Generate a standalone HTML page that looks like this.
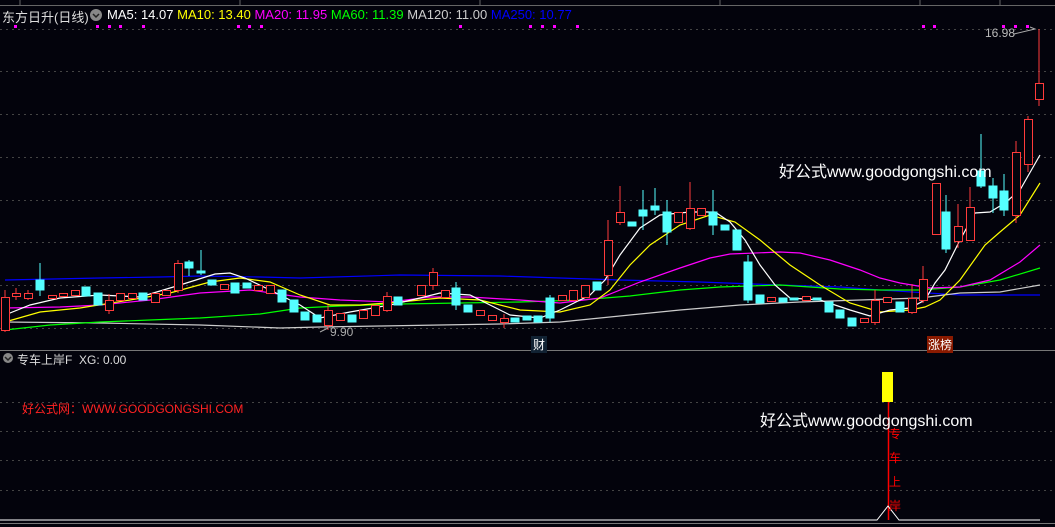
<!DOCTYPE html>
<html><head><meta charset="utf-8"><style>
body{margin:0;width:1055px;height:527px;background:#03030c;overflow:hidden;font-family:"Liberation Sans","Noto Sans CJK SC",sans-serif}
.t{position:absolute;white-space:nowrap;font-size:12px}
</style></head><body>
<svg width="1055" height="527" style="position:absolute;left:0;top:0">
<g stroke="#444" stroke-dasharray="2,4" stroke-width="1">
<line x1="0" y1="29.5" x2="1055" y2="29.5"/><line x1="0" y1="71.5" x2="1055" y2="71.5"/><line x1="0" y1="114.5" x2="1055" y2="114.5"/><line x1="0" y1="157.5" x2="1055" y2="157.5"/><line x1="0" y1="200.5" x2="1055" y2="200.5"/><line x1="0" y1="242.5" x2="1055" y2="242.5"/><line x1="0" y1="285.5" x2="1055" y2="285.5"/><line x1="0" y1="328.5" x2="1055" y2="328.5"/>
<line x1="0" y1="402.5" x2="1055" y2="402.5"/><line x1="0" y1="431.5" x2="1055" y2="431.5"/><line x1="0" y1="460.5" x2="1055" y2="460.5"/><line x1="0" y1="490.5" x2="1055" y2="490.5"/>
</g>
<g stroke="#666"><line x1="0" y1="5.5" x2="1055" y2="5.5"/><line x1="20" y1="0" x2="20" y2="5"/><line x1="240" y1="0" x2="240" y2="5"/><line x1="480" y1="0" x2="480" y2="5"/><line x1="720" y1="0" x2="720" y2="5"/><line x1="920" y1="0" x2="920" y2="5"/><line x1="1000" y1="0" x2="1000" y2="5"/></g>
<line x1="0" y1="350.5" x2="1055" y2="350.5" stroke="#777"/>
<line x1="0" y1="523.5" x2="1055" y2="523.5" stroke="#777"/>
<g fill="#f0f">
<rect x="14" y="25" width="3" height="3"/><rect x="96" y="25" width="3" height="3"/><rect x="108" y="25" width="3" height="3"/><rect x="119" y="25" width="3" height="3"/><rect x="142" y="25" width="3" height="3"/><rect x="237" y="25" width="3" height="3"/><rect x="248" y="25" width="3" height="3"/><rect x="260" y="25" width="3" height="3"/><rect x="459" y="25" width="3" height="3"/><rect x="529" y="25" width="3" height="3"/><rect x="541" y="25" width="3" height="3"/><rect x="553" y="25" width="3" height="3"/><rect x="576" y="25" width="3" height="3"/><rect x="922" y="25" width="3" height="3"/><rect x="933" y="25" width="3" height="3"/><rect x="1002" y="25" width="3" height="3"/><rect x="1014" y="25" width="3" height="3"/><rect x="1026" y="25" width="3" height="3"/>
</g>
<g fill="none" stroke-width="1.2">
<polyline stroke="#00f" points="5,280 100,278 160,277 200,276 260,277 300,278 400,275 500,276 560,278 620,280 700,282 780,285 840,287 880,290 960,295 1040,295"/>
<polyline stroke="#ccc" points="5,322 100,323 200,325 280,328 320,327 380,326 440,325 500,324 560,322 600,318 680,310 740,305 800,302 860,300 920,298 960,293 1000,292 1040,285"/>
<polyline stroke="#0f0" points="5,330 50,325 100,322 150,320 200,318 260,314 300,308 340,306 400,304 460,303 520,302 580,300 630,296 680,290 720,287 780,285 840,289 880,290 920,290 960,287 1000,280 1040,268"/>
<polyline stroke="#f0f" points="5,308 60,307 100,305 150,300 200,293 250,290 300,297 340,300 390,302 430,297 470,297 520,300 560,303 600,298 640,282 680,268 710,258 730,254 780,252 800,253 830,260 860,270 880,278 900,283 930,288 960,287 990,280 1020,262 1040,245"/>
<polyline stroke="#ff0" points="5,322 40,312 80,308 130,300 170,293 210,282 240,278 270,282 300,295 330,305 360,305 400,302 440,298 480,300 520,310 560,312 590,305 610,290 630,265 650,245 680,225 710,215 735,222 760,240 790,265 820,285 850,303 880,312 910,310 925,307 940,300 960,280 985,245 1000,232 1020,215 1040,183"/>
<polyline stroke="#fff" points="5,315 30,305 60,298 100,295 140,297 180,285 215,274 230,273 245,278 270,290 300,305 320,318 350,312 390,305 420,298 440,293 470,295 490,305 510,315 540,318 560,310 590,295 605,280 620,255 640,228 660,215 690,212 715,212 730,222 745,240 760,265 775,285 790,298 820,300 850,310 870,316 890,310 910,308 925,300 935,283 945,270 960,240 975,213 990,212 1005,203 1020,190 1040,155"/>
</g>
<g id="c" stroke-width="1">
<!-- red: hollow -->
<g stroke="#ff3b3b" fill="#03030c">
<line x1="5" y1="290" x2="5" y2="332"/><rect x="1.5" y="297.5" width="8" height="33"/>
<line x1="16" y1="288" x2="16" y2="300"/><rect x="12.5" y="293.5" width="8" height="3"/>
<line x1="28" y1="290" x2="28" y2="300"/><rect x="24.5" y="293.5" width="8" height="5"/>
<rect x="48.5" y="295.5" width="8" height="3"/><rect x="59.5" y="293.5" width="8" height="3"/><rect x="71.5" y="290.5" width="8" height="5"/>
<line x1="109" y1="294" x2="109" y2="314"/><rect x="105.5" y="300.5" width="8" height="10"/>
<rect x="116.5" y="293.5" width="8" height="7"/><rect x="128.5" y="293.5" width="8" height="5"/><rect x="151.5" y="293.5" width="8" height="9"/><rect x="162.5" y="290.5" width="8" height="5"/>
<line x1="178" y1="260" x2="178" y2="293"/><rect x="174.5" y="263.5" width="8" height="27"/>
<rect x="220.5" y="284.5" width="8" height="5"/><rect x="254.5" y="285.5" width="8" height="5"/><rect x="266.5" y="285.5" width="8" height="8"/>
<line x1="328" y1="305" x2="328" y2="330"/><rect x="324.5" y="310.5" width="8" height="15"/>
<rect x="336.5" y="313.5" width="8" height="7"/><rect x="359.5" y="310.5" width="8" height="8"/><rect x="371.5" y="305.5" width="8" height="10"/>
<line x1="387" y1="292" x2="387" y2="312"/><rect x="383.5" y="296.5" width="8" height="14"/>
<rect x="417.5" y="285.5" width="8" height="10"/>
<line x1="433" y1="268" x2="433" y2="290"/><rect x="429.5" y="272.5" width="8" height="13"/>
<rect x="441.5" y="290.5" width="8" height="7"/><rect x="476.5" y="310.5" width="8" height="5"/><rect x="488.5" y="315.5" width="8" height="5"/>
<line x1="504" y1="314" x2="504" y2="328"/><rect x="500.5" y="318.5" width="8" height="4"/>
<rect x="558.5" y="295.5" width="8" height="5"/><rect x="569.5" y="290.5" width="8" height="10"/><rect x="581.5" y="285.5" width="8" height="12"/>
<line x1="608" y1="220" x2="608" y2="285"/><rect x="604.5" y="240.5" width="8" height="35"/>
<line x1="620" y1="186" x2="620" y2="225"/><rect x="616.5" y="212.5" width="8" height="10"/>
<rect x="674.5" y="212.5" width="8" height="10"/>
<line x1="690" y1="182" x2="690" y2="230"/><rect x="686.5" y="208.5" width="8" height="20"/>
<rect x="697.5" y="208.5" width="8" height="7"/><rect x="767.5" y="297.5" width="8" height="4"/><rect x="802.5" y="296.5" width="8" height="4"/><rect x="860.5" y="318.5" width="8" height="4"/>
<line x1="875" y1="290" x2="875" y2="325"/><rect x="871.5" y="300.5" width="8" height="22"/>
<rect x="883.5" y="297.5" width="8" height="5"/>
<line x1="912" y1="284" x2="912" y2="314"/><rect x="908.5" y="298.5" width="8" height="14"/>
<line x1="923" y1="266" x2="923" y2="303"/><rect x="919.5" y="279.5" width="8" height="21"/>
<rect x="932.5" y="183.5" width="8" height="51"/>
<line x1="958" y1="204" x2="958" y2="248"/><rect x="954.5" y="226.5" width="8" height="15"/>
<line x1="970" y1="187" x2="970" y2="241"/><rect x="966.5" y="207.5" width="8" height="33"/>
<line x1="1016" y1="141" x2="1016" y2="223"/><rect x="1012.5" y="152.5" width="8" height="63"/>
<line x1="1028" y1="116" x2="1028" y2="172"/><rect x="1024.5" y="119.5" width="8" height="45"/>
<line x1="1039" y1="29" x2="1039" y2="106"/><rect x="1035.5" y="83.5" width="8" height="16"/>
</g>
<g stroke="#5ff" fill="#5ff">
<line x1="40" y1="263" x2="40" y2="296"/><rect x="36" y="280" width="8" height="10"/>
<rect x="82" y="287" width="8" height="9"/><rect x="94" y="293" width="8" height="12"/><rect x="139" y="293" width="8" height="7"/>
<line x1="189" y1="260" x2="189" y2="276"/><rect x="185" y="262" width="8" height="6"/>
<line x1="201" y1="250" x2="201" y2="275"/><rect x="197" y="271" width="8" height="2"/>
<rect x="208" y="280" width="8" height="5"/><rect x="231" y="283" width="8" height="10"/><rect x="243" y="283" width="8" height="5"/>
<rect x="278" y="290" width="8" height="12"/><rect x="290" y="300" width="8" height="12"/><rect x="301" y="312" width="8" height="8"/><rect x="313" y="315" width="8" height="7"/><rect x="348" y="315" width="8" height="7"/>
<rect x="394" y="297" width="8" height="8"/><line x1="456" y1="282" x2="456" y2="310"/><rect x="452" y="288" width="8" height="17"/>
<rect x="464" y="305" width="8" height="7"/><rect x="511" y="318" width="8" height="4"/><rect x="523" y="316" width="8" height="4"/><rect x="534" y="316" width="8" height="6"/>
<line x1="550" y1="295" x2="550" y2="322"/><rect x="546" y="298" width="8" height="20"/>
<rect x="593" y="282" width="8" height="8"/><rect x="628" y="222" width="8" height="4"/>
<line x1="643" y1="190" x2="643" y2="230"/><rect x="639" y="210" width="8" height="6"/>
<line x1="655" y1="188" x2="655" y2="215"/><rect x="651" y="206" width="8" height="4"/>
<line x1="667" y1="200" x2="667" y2="245"/><rect x="663" y="212" width="8" height="20"/>
<line x1="713" y1="190" x2="713" y2="235"/><rect x="709" y="212" width="8" height="13"/>
<rect x="721" y="225" width="8" height="5"/><rect x="733" y="230" width="8" height="20"/>
<line x1="748" y1="255" x2="748" y2="303"/><rect x="744" y="262" width="8" height="38"/>
<rect x="756" y="295" width="8" height="8"/><rect x="779" y="298" width="8" height="4"/><rect x="790" y="298" width="8" height="2"/><rect x="813" y="298" width="8" height="2"/>
<rect x="825" y="302" width="8" height="10"/><rect x="836" y="310" width="8" height="8"/><rect x="848" y="318" width="8" height="8"/>
<rect x="896" y="302" width="8" height="10"/>
<line x1="946" y1="195" x2="946" y2="253"/><rect x="942" y="212" width="8" height="37"/>
<line x1="981" y1="134" x2="981" y2="188"/><rect x="977" y="171" width="8" height="15"/>
<line x1="993" y1="178" x2="993" y2="213"/><rect x="989" y="186" width="8" height="12"/>
<line x1="1004" y1="174" x2="1004" y2="216"/><rect x="1000" y="191" width="8" height="19"/>
</g>
</g>
<polyline points="1014,34 1035,29 1030,27" fill="none" stroke="#aaa"/>
<line x1="320" y1="332" x2="328" y2="328" stroke="#aaa"/>
<rect x="882" y="372" width="11" height="30" fill="#ff0"/>
<line x1="888.5" y1="402" x2="888.5" y2="520" stroke="#f00" stroke-width="1.5"/>
<polyline points="0,520 877,520 888,506 899,520 1040,520" fill="none" stroke="#fff"/>
<circle cx="96" cy="15" r="6" fill="#888"/><polyline points="93,14 96,17 99,14" fill="none" stroke="#222" stroke-width="1.5"/>
<circle cx="8" cy="358" r="5" fill="#888"/><polyline points="5,357 8,360 11,357" fill="none" stroke="#222" stroke-width="1.5"/>
</svg>
<div class="t" style="left:2px;top:7px;color:#ddd;font-size:13px">东方日升(日线)</div>
<div class="t" style="left:107px;top:7px;font-size:13px"><span style="color:#fff">MA5: 14.07</span> <span style="color:#ff0">MA10: 13.40</span> <span style="color:#f0f">MA20: 11.95</span> <span style="color:#0f0">MA60: 11.39</span> <span style="color:#ccc">MA120: 11.00</span> <span style="color:#00f">MA250: 10.77</span></div>
<div class="t" style="left:985px;top:26px;color:#bbb">16.98</div>
<div class="t" style="left:330px;top:325px;color:#aaa">9.90</div>
<div class="t" style="left:531px;top:336px;color:#fff;background:#123;padding:0 2px">财</div>
<div class="t" style="left:927px;top:336px;color:#fff;background:#8a1a00;padding:0 1px">涨榜</div>
<div class="t" style="left:779px;top:158px;color:#fff;font-size:16px">好公式www.goodgongshi.com</div>
<div class="t" style="left:17px;top:351px;color:#ddd">专车上岸F&nbsp; XG: 0.00</div>
<div class="t" style="left:22px;top:400px;color:#f22">好公式网：WWW.GOODGONGSHI.COM</div>
<div class="t" style="left:760px;top:407px;color:#fff;font-size:16px">好公式www.goodgongshi.com</div>
<div class="t" style="left:889px;top:422px;color:#f00;width:12px;white-space:normal;line-height:24px">专车上岸</div>
</body></html>
